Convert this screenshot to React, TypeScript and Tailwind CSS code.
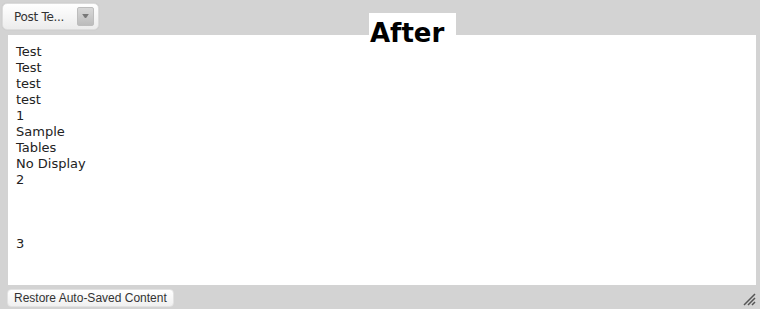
const lines = ["Test", "Test", "test", "test", "1", "Sample", "Tables", "No Display", "2", "", "", "", "3"];

export default function App() {
  return (
    <div className="relative w-[760px] h-[309px] bg-[#d3d3d3] overflow-hidden font-['DejaVu_Sans',sans-serif]">
      {/* Toolbar */}
      <div className="h-[35px] flex items-start pt-[3px] pl-[2px]">
        <div className="flex items-center h-[27px] w-[97px] rounded-[5px] bg-gradient-to-b from-white to-[#ececec] border border-[#dcdcdc] shadow-[0_0_1px_rgba(0,0,0,0.15)] pl-[11px] pr-[3px]">
          <span className="text-[12px] text-[#333] tracking-[-0.3px]">Post Te...</span>
          <span className="ml-auto mr-[1px] w-[17px] h-[19px] rounded-[2px] border border-[#bdbdbd] bg-gradient-to-b from-[#d8d8d8] to-[#bcbcbc] flex items-center justify-center">
            <svg width="7" height="5" viewBox="0 0 7 5">
              <path d="M0.5 0.5h6M1.5 1.5l2 2.5l2-2.5z" stroke="#777" strokeWidth="1" fill="#777" />
            </svg>
          </span>
        </div>
      </div>

      {/* Label overlay */}
      <div className="absolute left-[369px] top-[13px] w-[87px] h-[24px] bg-white flex items-end pl-[1px]">
        <span className="font-['DejaVu_Sans',sans-serif] font-bold text-[26px] leading-[28px] text-black -mb-[10px]">
          After
        </span>
      </div>

      {/* Editor area */}
      <div className="ml-[8px] mr-[4px] h-[250px] bg-white pt-[9px] pl-[8px] text-[13px] leading-[16px] text-[#222]">
        {lines.map((l, i) => (
          <div key={i} className="h-[16px]">
            {l}
          </div>
        ))}
      </div>

      {/* Footer */}
      <div className="flex items-start justify-between pt-[4px] pl-[7px] pr-[4px]">
        <span className="h-[18px] px-[6px] rounded-[4px] bg-gradient-to-b from-white to-[#f0f0f0] border border-[#e2e2e2] text-[12px] leading-[16px] text-[#333] font-['Liberation_Sans',Arial,sans-serif]">
          Restore Auto-Saved Content
        </span>
        <svg width="13" height="13" viewBox="0 0 13 13" className="mt-[4px]">
          <path d="M12 1L1 12M12 5L5 12M12 9L9 12" stroke="#555" strokeWidth="1.5" />
        </svg>
      </div>
    </div>
  );
}
